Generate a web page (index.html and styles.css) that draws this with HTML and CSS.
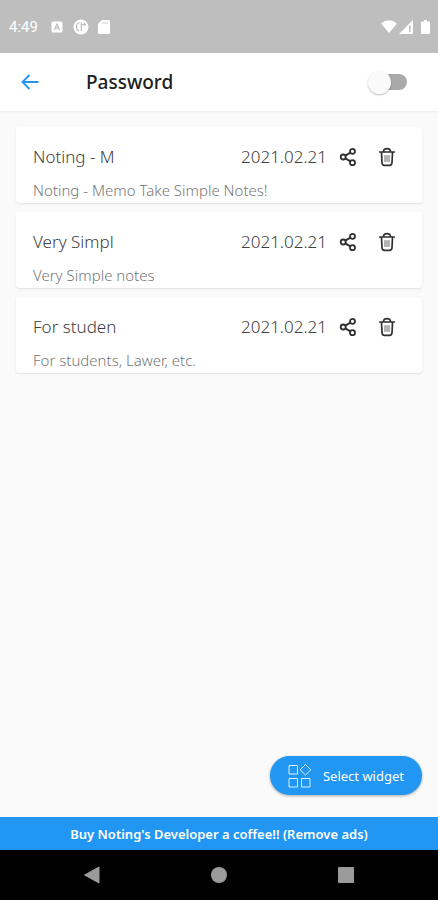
FILE: index.html
```html
<!DOCTYPE html>
<html lang="en">
<head>
<meta charset="utf-8">
<meta name="viewport" content="width=device-width, initial-scale=1">
<title>Password</title>
<link rel="stylesheet" href="styles.css">
</head>
<body>
<svg class="sprite" aria-hidden="true">
  <symbol id="share" viewBox="0 0 18 20">
    <g fill="none" stroke="currentColor" stroke-width="1.8"><circle cx="4.200" cy="10" r="2.500"/><circle cx="13.500" cy="4.300" r="2.500"/><circle cx="13.500" cy="15.700" r="2.500"/><path d="M6.300 8.600 11.400 5.600M6.300 11.400l5.100 3"/></g>
  </symbol>
  <symbol id="trash" viewBox="0 0 18 20">
    <g fill="none" stroke="currentColor" stroke-width="1.700" stroke-linecap="round" stroke-linejoin="round"><path d="M1.700 5h14.600M5.500 4.800C5.500 2.400 6.500 1.700 9 1.700s3.500.7 3.500 3.100M3.500 5.500l.5 10.200q.2 2.600 2.400 2.600h5.200q2.200 0 2.400-2.600l.5-10.200"/><path stroke="#777" stroke-width="1.100" d="M7 8.500v6M9 8.500v6M11 8.500v6"/></g>
  </symbol>
</svg>
<div class="screen">
  <div class="status">
    <span class="clock">4:49</span>
    <svg class="s-app" width="12" height="12" viewBox="0 0 12 12"><rect x=".5" y=".5" width="11" height="11" rx="1.500" fill="#fff"/><path d="M3.500 9 6 3l2.500 6M4.400 7.200h3.200" fill="none" stroke="#bebebe" stroke-width="1.200"/></svg>
    <svg class="s-round" width="16" height="16" viewBox="0 0 16 16"><circle cx="8" cy="8" r="7.500" fill="#fff"/><path d="M6.500 3.500A4.600 4.600 0 0 0 6 12M8.300 3.500v8.500M9 5.500h4M11.500 3.500v3.500" fill="none" stroke="#bebebe" stroke-width="1.200"/></svg>
    <svg width="12" height="14" viewBox="0 0 12 14"><path d="M4 0h6.500Q12 0 12 1.500v11q0 1.500-1.500 1.500h-9Q0 14 0 12.500V4z" fill="#fff"/><path d="M5 2v2M7 2v2M9 2v2" stroke="#bebebe" stroke-width=".8"/></svg>
    <svg class="s-wifi" width="16" height="13" viewBox="0 0 16 13"><path d="M0 3.500Q8-3 16 3.500L8 13z" fill="#fff"/></svg>
    <svg class="s-signal" width="14" height="14" viewBox="0 0 14 14"><path d="M14 0v14H0z" fill="#fff"/><path d="M10.800 5.500v6.500" stroke="#bebebe" stroke-width="1.500"/></svg>
    <svg width="9" height="14" viewBox="0 0 9 14"><path d="M3 0h3v1.500h2q1 0 1 1V13q0 1-1 1H1q-1 0-1-1V2.500q0-1 1-1h2z" fill="#fff"/></svg>
  </div>
  <header class="bar">
    <button class="back" aria-label="Back"><svg width="18" height="16" viewBox="0 0 18 16"><path d="M8.500 1 1.500 8l7 7M2 8h15.500" fill="none" stroke="currentColor" stroke-width="1.800"/></svg></button>
    <h1><label for="lock">Password</label></h1>
    <input id="lock" class="switch" type="checkbox" role="switch">
  </header>
  <main>
    <ul class="notes">
      <li class="note">
        <div class="row"><h2>Noting - M</h2><time datetime="2021-02-21">2021.02.21</time><button aria-label="Share"><svg><use href="#share"/></svg></button><button aria-label="Delete"><svg><use href="#trash"/></svg></button></div>
        <p>Noting - Memo Take Simple Notes!</p>
      </li>
      <li class="note">
        <div class="row"><h2>Very Simpl</h2><time datetime="2021-02-21">2021.02.21</time><button aria-label="Share"><svg><use href="#share"/></svg></button><button aria-label="Delete"><svg><use href="#trash"/></svg></button></div>
        <p>Very Simple notes</p>
      </li>
      <li class="note">
        <div class="row"><h2>For studen</h2><time datetime="2021-02-21">2021.02.21</time><button aria-label="Share"><svg><use href="#share"/></svg></button><button aria-label="Delete"><svg><use href="#trash"/></svg></button></div>
        <p>For students, Lawer, etc.</p>
      </li>
    </ul>
    <button class="fab"><svg width="24" height="24" viewBox="0 0 24 24"><path d="M1 1.500h8.500V10H1zM1 14.500h8.500V23H1zM13.500 14.500H22V23h-8.500zM17.500 .500l5.300 5.300-5.300 5.300-5.300-5.300z" fill="none" stroke="currentColor" stroke-opacity=".85"/></svg>Select widget</button>
  </main>
  <button class="banner">Buy Noting's Developer a coffee!! (Remove ads)</button>
  <nav class="system">
    <button aria-label="Back"><svg viewBox="0 0 18 18"><path d="M1.500 9 16 1v16z" fill="#9b9b9b" stroke="#9b9b9b" stroke-linejoin="round"/></svg></button>
    <button aria-label="Home"><svg viewBox="0 0 18 18"><circle cx="9" cy="9" r="8" fill="#9b9b9b"/></svg></button>
    <button aria-label="Recent apps"><svg viewBox="0 0 18 18"><rect x="1" y="1" width="16" height="16" rx="1" fill="#9b9b9b"/></svg></button>
  </nav>
</div>
</body>
</html>
```
FILE: styles.css
```css
* { box-sizing: border-box; }
body { margin: 0; font-family: "Noto Sans", "Open Sans", sans-serif; background: #fafafa; }
button { border: 0; padding: 0; background: none; color: inherit; font: inherit; cursor: pointer; }
svg { display: block; flex: none; }
h1, h2, p, ul { margin: 0; padding: 0; font-weight: inherit; }
.sprite { position: absolute; width: 0; height: 0; }
.screen { min-height: 100vh; display: flex; flex-direction: column; }

.status { height: 53px; padding: 0 8px 0 9px; display: flex; align-items: center; background: #bebebe; color: #fff; }
.clock { font-family: Roboto, sans-serif; font-size: 15px; line-height: 20px; }
.s-app { margin-left: 13px; }
.s-round { margin: 0 9px 0 10px; }
.s-wifi { margin-left: auto; }
.s-signal { margin: 0 8px 0 2px; }

.bar { height: 59px; padding: 0 31px 0 15px; display: flex; align-items: center; background: #fff; border-bottom: 1px solid #f0f0f0; box-shadow: 0 1px 2px #0000000a; }
.back { width: 30px; height: 40px; display: grid; place-items: center; color: #2196f3; }
.bar h1 { flex: 1; margin-left: 41px; font-size: 19px; line-height: 28px; font-weight: 500; color: #202020; }
.switch { appearance: none; width: 36px; height: 16px; margin: 0; display: flex; align-items: center; border-radius: 8px; background: #a9a9a9; cursor: pointer; }
.switch::before { content: ""; width: 23px; height: 23px; flex: none; margin-left: -3px; border-radius: 50%; background: #fafafa; box-shadow: 0 1px 2px #0004; }
.switch:checked { background: #90caf9; }
.switch:checked::before { margin-left: 16px; background: #2196f3; }

main { flex: 1; position: relative; padding: 15px 16px 80px; }
.notes { list-style: none; display: grid; gap: 9px; }
.note { min-height: 76px; padding: 16px 17px 0; border-radius: 3px; background: #fff; box-shadow: 0 1px 2px #0000001a; }
.row { display: flex; align-items: center; height: 28px; color: #404040; }
.row h2 { flex: 1; font-size: 17px; line-height: 28px; font-weight: 300; }
.row time { font-size: 17px; line-height: 28px; font-weight: 300; margin-right: 12px; }
.row button { width: 18px; height: 20px; color: #303030; }
.row button + button { margin: 0 9px 0 21px; }
.row button svg { width: 18px; height: 20px; }
.note p { margin-top: 8px; font-size: 15px; line-height: 22px; font-weight: 300; color: #777; }

.fab { position: absolute; right: 16px; bottom: 22px; height: 39px; padding: 0 18px; display: flex; align-items: center; gap: 11px; border-radius: 20px; background: #2196f3; color: #fff; font-size: 13px; box-shadow: 0 1px 3px #0005; }
.banner { height: 33px; background: #2196f3; color: #fff; font-size: 13px; font-weight: 600; }
.system { height: 50px; padding: 0 29px; display: flex; justify-content: space-around; align-items: center; background: #000; }
.system svg { width: 18px; height: 18px; }
```
